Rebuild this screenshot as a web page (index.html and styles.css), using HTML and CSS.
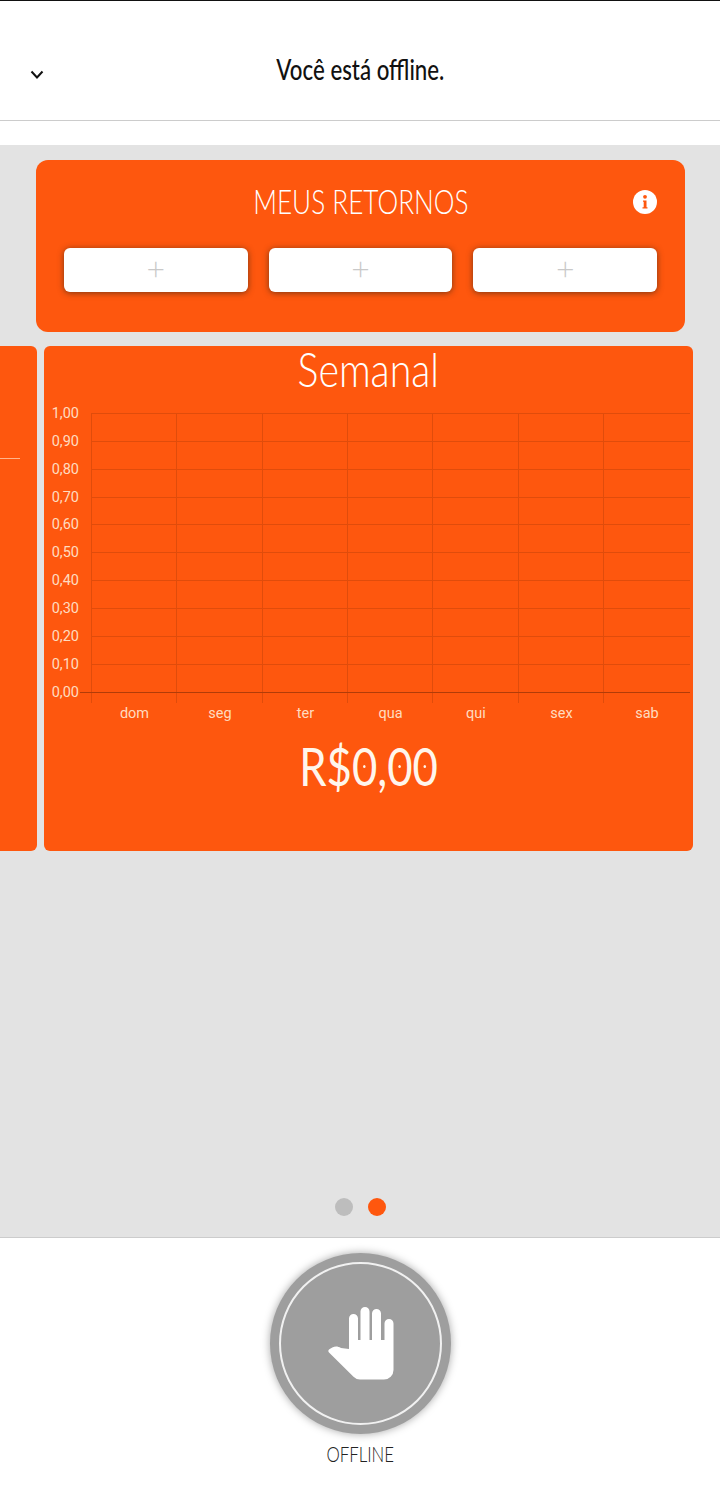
FILE: index.html
```html
<!DOCTYPE html>
<html lang="pt-BR">
<head>
    <meta charset="UTF-8">
    <meta name="viewport" content="width=device-width, initial-scale=1.0">
    <title>Você está offline</title>
    <link rel="stylesheet" href="styles.css">
</head>
<body>
    <header class="topo">
        <div class="topo-linha">
            <svg class="seta" width="14" height="10" viewBox="0 0 14 10"><path d="M1.5 1.5 7 7.5l5.5-6" fill="none" stroke="#111" stroke-width="2"/></svg>
            <h1 class="topo-titulo"><span class="estreito">Você está offline.</span></h1>
        </div>
    </header>

    <main class="conteudo">
        <section class="retornos">
            <div class="retornos-topo">
                <h2 class="retornos-titulo"><span class="estreito">MEUS RETORNOS</span></h2>
                <svg class="info" width="24" height="24" viewBox="0 0 24 24"><circle cx="12" cy="12" r="12" fill="#fff"/><circle cx="12" cy="6.800" r="1.900" fill="#fe570e"/><path d="M10 10.400h3.500v6.800h1v1.400h-5v-1.400h1.200v-5.400H10z" fill="#fe570e"/></svg>
            </div>
            <div class="retornos-botoes">
                <button class="botao-mais">+</button>
                <button class="botao-mais">+</button>
                <button class="botao-mais">+</button>
            </div>
        </section>

        <div class="carrossel">
            <div class="cartao cartao-anterior"><div class="linha-anterior"></div></div>
            <section class="cartao">
                <h2 class="cartao-titulo"><span class="estreito">Semanal</span></h2>
                <svg class="grafico" width="649" height="380" viewBox="44 400 649 380">
                    <g class="grade">
                        <path d="M92 413.500H690M92 441.500H690M92 469.500H690M92 497.500H690M92 524.500H690M92 552.500H690M92 580.500H690M92 608.500H690M92 636.500H690M92 664.500H690"/>
                        <path d="M91.500 413V703M176.500 413V703M262.500 413V703M347.500 413V703M432.500 413V703M518.500 413V703M603.500 413V703"/>
                    </g>
                    <path class="eixo" d="M80 692.500H690"/>
                    <g class="valores">
                        <text x="79" y="418">1,00</text>
                        <text x="79" y="446">0,90</text>
                        <text x="79" y="474">0,80</text>
                        <text x="79" y="502">0,70</text>
                        <text x="79" y="529">0,60</text>
                        <text x="79" y="557">0,50</text>
                        <text x="79" y="585">0,40</text>
                        <text x="79" y="613">0,30</text>
                        <text x="79" y="641">0,20</text>
                        <text x="79" y="669">0,10</text>
                        <text x="79" y="697">0,00</text>
                    </g>
                    <g class="dias">
                        <text x="134.500" y="718">dom</text>
                        <text x="220" y="718">seg</text>
                        <text x="305.500" y="718">ter</text>
                        <text x="390.500" y="718">qua</text>
                        <text x="476" y="718">qui</text>
                        <text x="561.500" y="718">sex</text>
                        <text x="647" y="718">sab</text>
                    </g>
                </svg>
                <p class="cartao-total"><span class="estreito">R$<span class="zero">0</span>,<span class="zero">0</span><span class="zero">0</span></span></p>
            </section>
        </div>

        <div class="pontos">
            <span class="ponto"></span>
            <span class="ponto ponto-ativo"></span>
        </div>
    </main>

    <footer class="rodape">
        <button class="botao-status">
            <span class="botao-anel">
                <svg width="68" height="74" viewBox="326 1307 68 74"><path d="M349 1349V1318.500a4.500 4.500 0 0 1 9 0V1340h2.500V1311.500a4.500 4.500 0 0 1 9 0V1340h2.500V1313.500a4.500 4.500 0 0 1 9 0V1340h3.500V1323.500a4.500 4.500 0 0 1 9 0V1370a9.500 9.500 0 0 1-9.500 9.500H360a9 9 0 0 1-6.500-2.800L329 1352.500a2 2 0 0 1 .3-3.200l3-1.800c3-1.500 5.500-1.300 8.700.5z" fill="#fff"/></svg>
            </span>
        </button>
        <span class="rodape-texto"><span class="estreito">OFFLINE</span></span>
    </footer>
</body>
</html>
```

FILE: styles.css
```css
* {
    box-sizing: border-box;
}
html, body {
    margin: 0;
    padding: 0;
}
body {
    width: 720px;
    height: 1497px;
    overflow: hidden;
    font-family: Lato, Arial, sans-serif;
    background: #fff;
    display: flex;
    flex-direction: column;
}
h1, h2, p {
    margin: 0;
    font-weight: normal;
}
.estreito {
    display: inline-block;
    transform: scaleX(0.8);
    white-space: nowrap;
}

.topo {
    height: 145px;
    flex: none;
    background: #fff;
    border-top: 1px solid #111;
}
.topo-linha {
    height: 120px;
    border-bottom: 1px solid #ccc;
    position: relative;
    display: flex;
    align-items: center;
    justify-content: center;
}
.topo-titulo {
    font-size: 29px;
    font-weight: 500;
    color: #111;
    margin-top: 16px;
}
.topo-titulo .estreito {
    transform: scaleX(0.768);
}
.seta {
    position: absolute;
    left: 30px;
    top: 69px;
}

.conteudo {
    height: 1092px;
    flex: none;
    background: #e3e3e3;
    padding-top: 15px;
    display: flex;
    flex-direction: column;
}
.retornos {
    width: 649px;
    height: 172px;
    margin-left: 36px;
    padding: 22px 28px 0;
    background: #fe570e;
    border-radius: 12px;
}
.retornos-topo {
    height: 40px;
    display: flex;
    align-items: center;
    justify-content: center;
    position: relative;
}
.retornos-titulo {
    font-size: 34px;
    font-weight: 300;
    color: #fff;
    margin-top: -4px;
}
.retornos-titulo .estreito {
    transform: scaleX(0.77);
}
.info {
    position: absolute;
    right: 0;
    top: 8px;
}
.retornos-botoes {
    display: flex;
    gap: 21px;
    margin-top: 26px;
}
.botao-mais {
    flex: 1;
    height: 44px;
    padding: 0 0 4px;
    border: none;
    border-radius: 6px;
    background: #fff;
    color: #c9c9c9;
    font-family: Lato, Arial, sans-serif;
    font-size: 32px;
    font-weight: 300;
    line-height: 36px;
    box-shadow: 0 1px 6px rgba(70, 40, 20, 0.7);
}

.carrossel {
    display: flex;
    gap: 7px;
    margin-top: 14px;
    margin-left: -612px;
}
.cartao {
    width: 649px;
    height: 505px;
    flex: none;
    background: #fe570e;
    border-radius: 6px;
    text-align: center;
    color: #fff;
}
.cartao-anterior {
    position: relative;
}
.linha-anterior {
    position: absolute;
    right: 17px;
    top: 112px;
    width: 100%;
    height: 1px;
    background: #ffb48c;
}
.cartao-titulo {
    font-size: 48px;
    font-weight: 300;
    line-height: 46px;
    height: 54px;
}
.cartao-titulo .estreito {
    transform: scaleX(0.82);
}
.grafico {
    display: block;
}
.grade path {
    fill: none;
    stroke: #e04c0b;
    stroke-width: 1;
}
.eixo {
    fill: none;
    stroke: #b23c08;
    stroke-width: 1;
}
.valores text, .dias text {
    font-family: Roboto, Arial, sans-serif;
    font-size: 14.500px;
    fill: #ffdcc0;
}
.valores text {
    text-anchor: end;
}
.dias text {
    text-anchor: middle;
}
.cartao-total {
    font-size: 52px;
    font-weight: 400;
    line-height: 60px;
    margin-top: -44px;
    color: #fff6ec;
}
.cartao-total .estreito {
    transform: scaleX(0.84);
}
.zero {
    position: relative;
}
.zero::after {
    content: "";
    position: absolute;
    left: 50%;
    top: 50%;
    width: 3px;
    height: 3px;
    margin: -1px 0 0 -1.500px;
    border-radius: 50%;
    background: #fff6ec;
}

.pontos {
    display: flex;
    justify-content: center;
    gap: 15px;
    margin-top: auto;
    padding-bottom: 21px;
}
.ponto {
    width: 18px;
    height: 18px;
    border-radius: 50%;
    background: #bdbdbd;
}
.ponto-ativo {
    background: #fe570e;
}

.rodape {
    flex: 1;
    background: #fff;
    border-top: 1px solid #ccc;
    display: flex;
    flex-direction: column;
    align-items: center;
    padding-top: 15px;
}
.botao-status {
    width: 181px;
    height: 181px;
    padding: 9px;
    border: none;
    border-radius: 50%;
    background: #9e9e9e;
    box-shadow: 0 0 8px rgba(0, 0, 0, 0.35);
}
.botao-anel {
    width: 100%;
    height: 100%;
    border: 2px solid #f1f1f1;
    border-radius: 50%;
    display: flex;
    align-items: center;
    justify-content: center;
}
.rodape-texto {
    margin-top: 7px;
    font-size: 21px;
    font-weight: 300;
    line-height: 26px;
    color: #222;
}
```
